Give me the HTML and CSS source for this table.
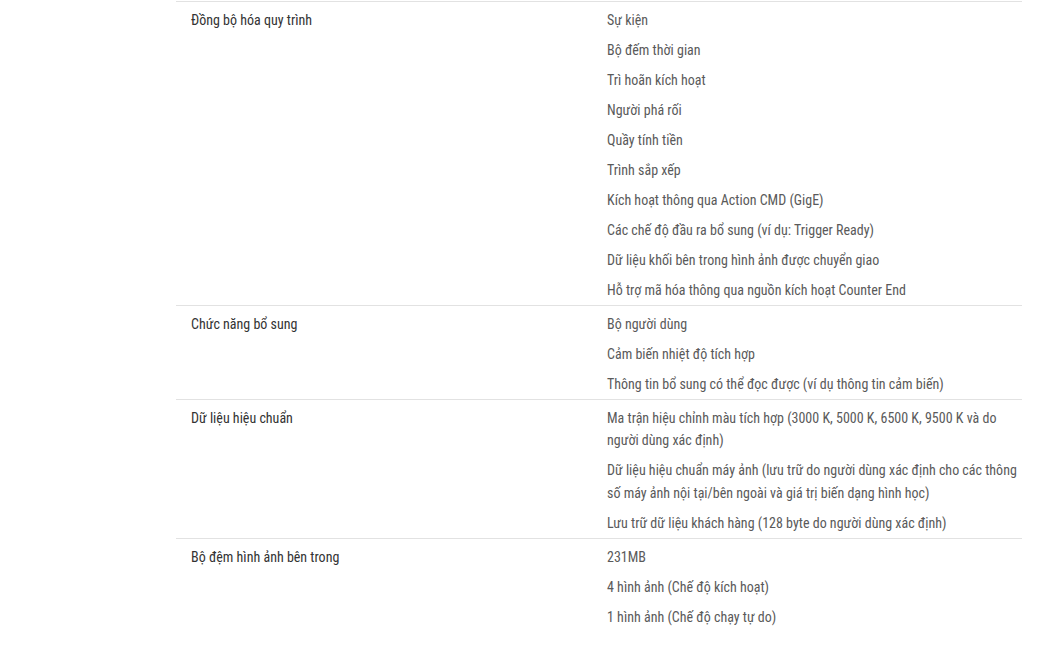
FILE: index.html
```html
<!DOCTYPE html>
<html lang="vi">
<head>
  <meta charset="UTF-8" />
  <title>Thông số kỹ thuật</title>
  <link rel="stylesheet" href="styles.css">
</head>
<body>

<div class="specs">

  <div class="spec-row">
    <div class="spec-name">Đồng bộ hóa quy trình</div>
    <div class="spec-values">
      <p>Sự kiện</p>
      <p>Bộ đếm thời gian</p>
      <p>Trì hoãn kích hoạt</p>
      <p>Người phá rối</p>
      <p>Quầy tính tiền</p>
      <p>Trình sắp xếp</p>
      <p>Kích hoạt thông qua Action CMD (GigE)</p>
      <p>Các chế độ đầu ra bổ sung (ví dụ: Trigger Ready)</p>
      <p>Dữ liệu khối bên trong hình ảnh được chuyển giao</p>
      <p>Hỗ trợ mã hóa thông qua nguồn kích hoạt Counter End</p>
    </div>
  </div>

  <div class="spec-row">
    <div class="spec-name">Chức năng bổ sung</div>
    <div class="spec-values">
      <p>Bộ người dùng</p>
      <p>Cảm biến nhiệt độ tích hợp</p>
      <p>Thông tin bổ sung có thể đọc được (ví dụ thông tin cảm biến)</p>
    </div>
  </div>

  <div class="spec-row">
    <div class="spec-name">Dữ liệu hiệu chuẩn</div>
    <div class="spec-values">
      <p>Ma trận hiệu chỉnh màu tích hợp (3000 K, 5000 K, 6500 K, 9500 K và do người dùng xác định)</p>
      <p>Dữ liệu hiệu chuẩn máy ảnh (lưu trữ do người dùng xác định cho các thông số máy ảnh nội tại/bên ngoài và giá trị biến dạng hình học)</p>
      <p>Lưu trữ dữ liệu khách hàng (128 byte do người dùng xác định)</p>
    </div>
  </div>

  <div class="spec-row">
    <div class="spec-name">Bộ đệm hình ảnh bên trong</div>
    <div class="spec-values">
      <p>231MB</p>
      <p>4 hình ảnh (Chế độ kích hoạt)</p>
      <p>1 hình ảnh (Chế độ chạy tự do)</p>
    </div>
  </div>

</div>

</body>
</html>
```

FILE: styles.css
```css
body {
  margin: 0;
  padding-top: 1px;
  background-color: #fff;
  font-family: "Roboto Condensed", "Liberation Sans Narrow", "DejaVu Sans Condensed", Roboto, sans-serif;
  font-size: 14px;
  line-height: 22.5px;
}

.specs {
  width: 846px;
  margin-left: 176px;
}

.spec-row {
  display: grid;
  grid-template-columns: 416px 1fr;
  border-top: 1px solid #e2e2e2;
  padding-top: 3px;
}

.spec-name {
  padding: 3.75px 15px;
  color: #333;
}

.spec-values {
  padding: 0 2px 0 15px;
  color: #5a5a5a;
}

.spec-values p {
  margin: 0;
  padding: 3.75px 0;
}
```
